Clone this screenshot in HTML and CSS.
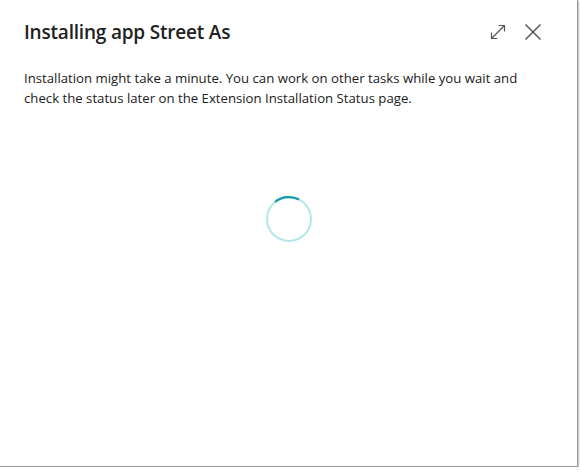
FILE: index.html
```html
<!DOCTYPE html>
<html>
<head>
<meta charset="utf-8">
<link rel="stylesheet" href="styles.css">
</head>
<body>
<div class="dialog">
  <div class="header">
    <h1 class="title">Installing app Street As</h1>
    <div class="actions">
      <button class="icon-btn" aria-label="Expand">
        <svg width="18" height="18" viewBox="0 0 18 18" fill="none" stroke="#555" stroke-width="1.2">
          <path d="M2.5 15.5 L15.5 2.5"/>
          <path d="M9.5 2.5 H15.5 V8.5"/>
          <path d="M2.5 9.5 V15.5 H8.5"/>
        </svg>
      </button>
      <button class="icon-btn" aria-label="Close">
        <svg width="18" height="18" viewBox="0 0 18 18" fill="none" stroke="#555" stroke-width="1.4">
          <path d="M1.5 1.5 L16.5 16.5"/>
          <path d="M16.5 1.5 L1.5 16.5"/>
        </svg>
      </button>
    </div>
  </div>
  <p class="message">Installation might take a minute. You can work on other tasks while you wait and check the status later on the Extension Installation Status page.</p>
  <div class="spinner-area">
    <svg class="spinner" width="48" height="48" viewBox="0 0 48 48">
      <circle cx="24" cy="24" r="22" fill="none" stroke="#b4e6ec" stroke-width="2"/>
      <path d="M10 7 A22 22 0 0 1 34 4.5" fill="none" stroke="#0f9aa4" stroke-width="2.2"/>
    </svg>
  </div>
</div>
</body>
</html>
```
FILE: styles.css
```css
html, body {
  margin: 0;
  padding: 0;
  background: #ffffff;
}
body {
  font-family: "Open Sans", "Noto Sans", sans-serif;
  color: #212121;
}
.dialog {
  width: 577px;
  height: 466px;
  background: #fff;
  border-right: 1px solid #9a9a9a;
  border-bottom: 1px solid #9a9a9a;
  box-shadow: 1px 1px 1px #c8c8c8;
  display: flex;
  flex-direction: column;
  box-sizing: content-box;
}
.header {
  display: flex;
  align-items: center;
  justify-content: space-between;
  padding: 18px 35px 0 24px;
  height: 28px;
}
.title {
  margin: 0;
  font-size: 19px;
  font-weight: 600;
  color: #212121;
  letter-spacing: -0.2px;
}
.actions {
  display: flex;
  gap: 17px;
  align-items: center;
}
.icon-btn {
  border: 0;
  background: none;
  padding: 0;
  width: 18px;
  height: 18px;
  display: flex;
}
.message {
  margin: 22px 40px 0 24px;
  font-size: 13.2px;
  line-height: 20px;
  color: #212121;
}
.spinner-area {
  display: flex;
  justify-content: center;
  padding-top: 87px;
}
```
